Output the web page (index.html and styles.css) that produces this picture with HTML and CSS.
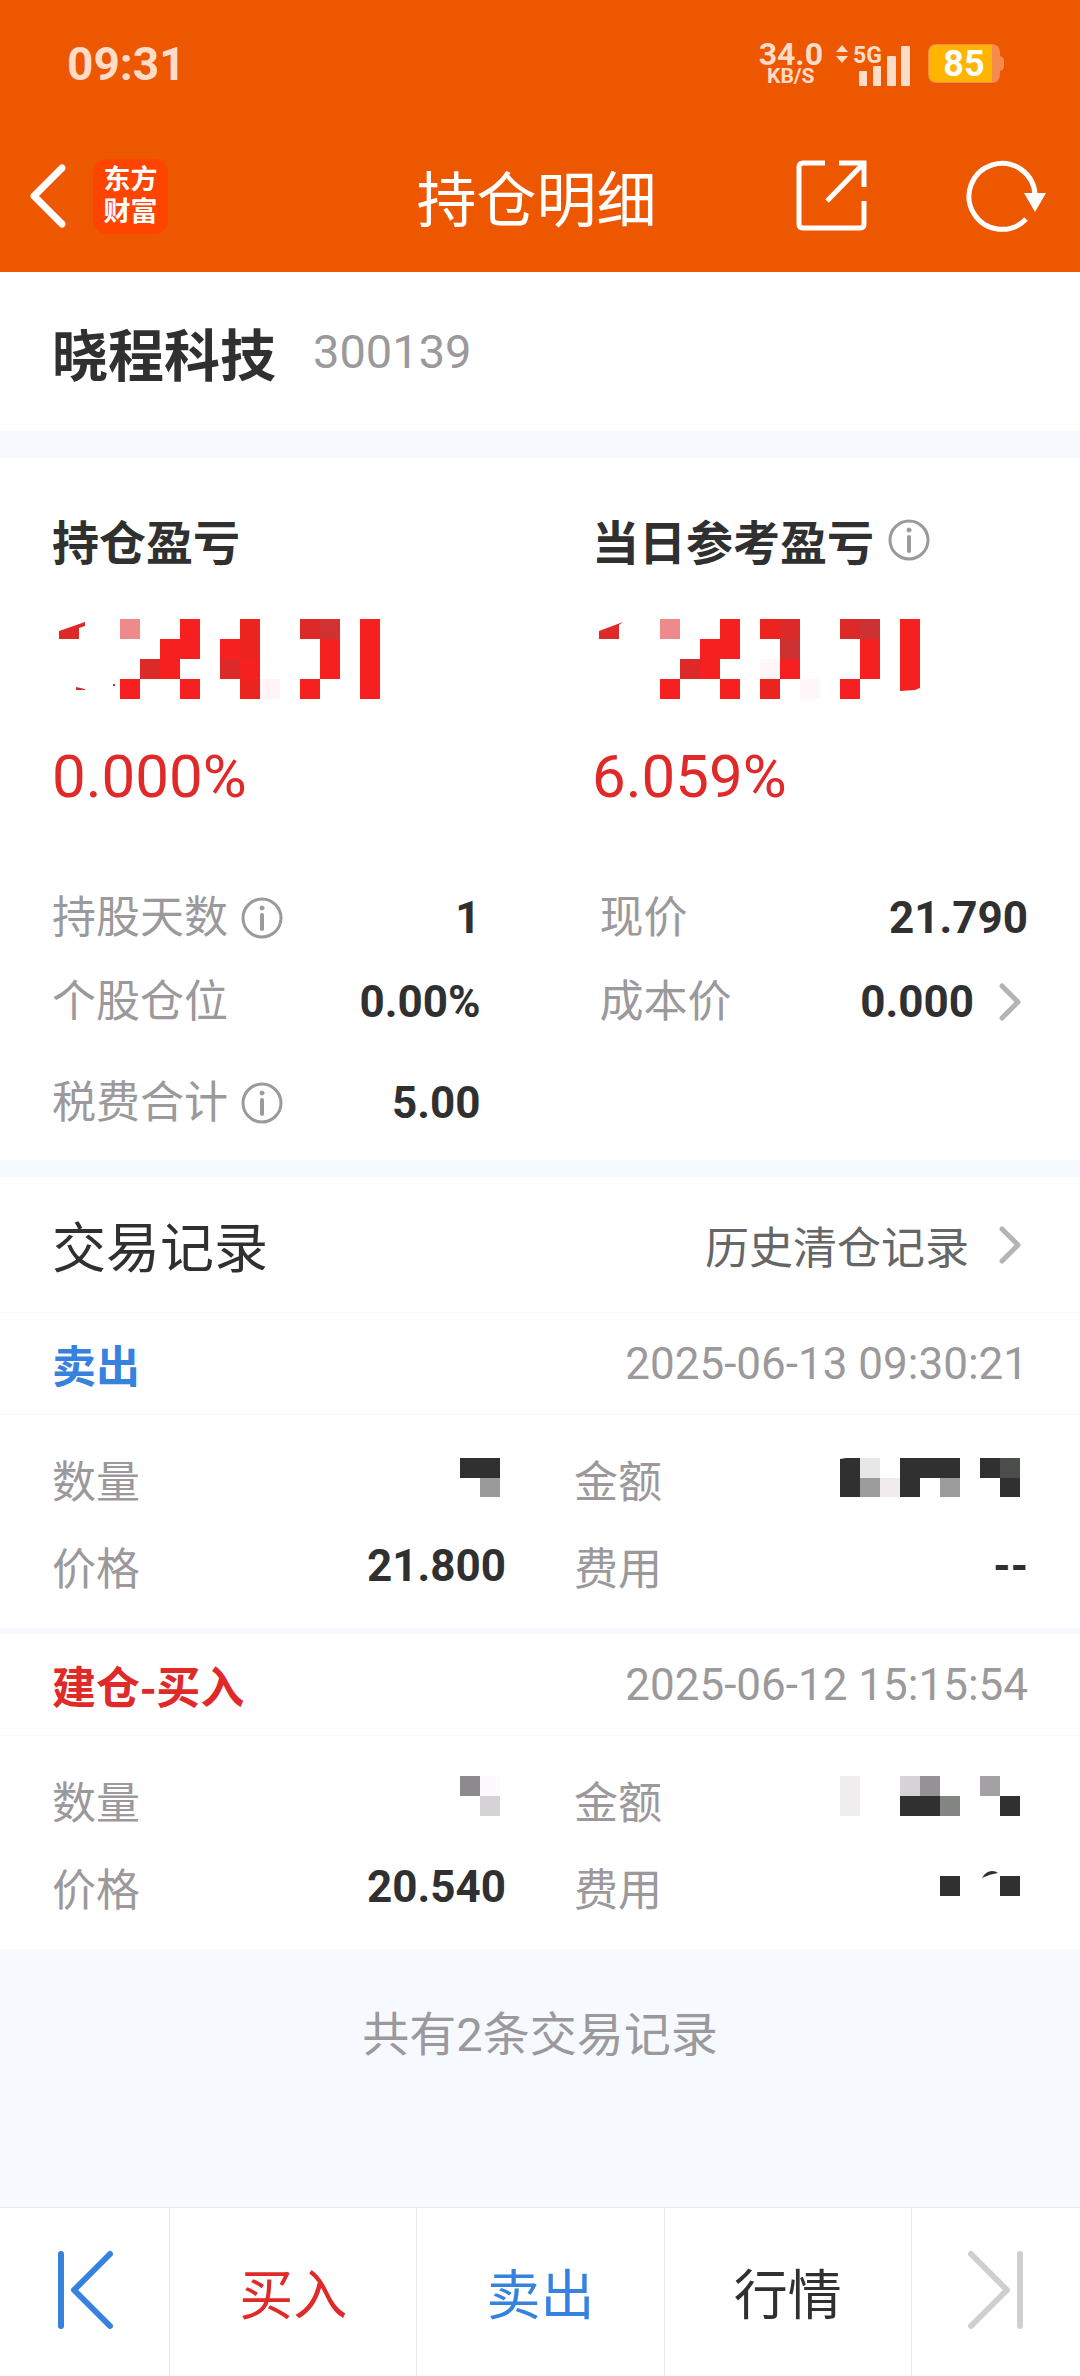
FILE: index.html
```html
<!DOCTYPE html>
<html lang="zh-CN">
<head>
    <meta charset="UTF-8">
    <meta name="viewport" content="width=device-width">
    <title>持仓明细</title>
    <link rel="stylesheet" href="styles.css">
</head>
<body>
    <header>
        <div class="status-bar">
            <span class="clock">09:31</span>
            <div class="status-right">
                <div class="net-speed"><span class="speed-num">34.0</span><span class="speed-unit">KB/S</span></div>
                <svg class="signal" width="76" height="44" viewBox="0 0 76 44" aria-hidden="true">
                    <path d="M2 10 L8 3 L14 10 Z M2 14 L8 21 L14 14 Z"/>
                    <text x="19" y="21">5G</text>
                    <rect x="25" y="29" width="8" height="15" rx="1"/>
                    <rect x="39" y="24" width="8" height="20" rx="1"/>
                    <rect x="53" y="14" width="9" height="30" rx="1"/>
                    <rect x="67" y="4" width="9" height="40" rx="1"/>
                </svg>
                <svg class="battery" width="76" height="40" viewBox="0 0 76 40" aria-hidden="true">
                    <path d="M9 0 H63 Q72 0 72 9 V12 Q76 13 76 17 V22 Q76 26 72 27 V30 Q72 39 63 39 H9 Q0 39 0 30 V9 Q0 0 9 0 Z" fill="#f58b4c"/>
                    <path d="M64 1 H9 Q1 1 1 9 V30 Q1 38 9 38 H64 Z" fill="#ffb400"/>
                    <text x="36" y="32">85</text>
                </svg>
            </div>
        </div>
        <div class="nav-bar">
            <div class="nav-left">
                <button class="icon-button" aria-label="返回">
                    <svg width="40" height="66" viewBox="0 0 40 66"><path d="M35 5 L7 33 L35 61" fill="none" stroke="#fff" stroke-width="7" stroke-linecap="round" stroke-linejoin="round"/></svg>
                </button>
                <div class="logo"><span>东方</span><span>财富</span></div>
            </div>
            <h1>持仓明细</h1>
            <div class="nav-right">
                <button class="icon-button" aria-label="分享">
                    <svg width="72" height="72" viewBox="0 0 72 72" fill="none" stroke="#fff" stroke-width="5">
                        <path d="M29 3 H7 Q3 3 3 7 V64 Q3 68 7 68 H64 Q68 68 68 64 V41"/>
                        <path d="M43 3 H68 V27 M68 3 L31 41"/>
                    </svg>
                </button>
                <button class="icon-button" aria-label="刷新">
                    <svg width="80" height="72" viewBox="0 0 80 72">
                        <path d="M60 59 A33 33 0 1 1 69 35" fill="none" stroke="#fff" stroke-width="5"/>
                        <path d="M58 33 H80 L69 52 Z" fill="#fff"/>
                    </svg>
                </button>
            </div>
        </div>
    </header>

    <main>
        <section class="stock">
            <h2>晓程科技</h2>
            <span class="code">300139</span>
        </section>

        <section class="profit">
            <div class="profit-top">
                <div class="profit-item">
                    <h3>持仓盈亏</h3>
                    <svg class="masked" width="340" height="80" viewBox="0 0 340 80" aria-hidden="true">
                        <path d="M7 12 L33 3 V7 L27 9 V20 H7 Z" fill="#dc2a28"/>
                        <path d="M24 68 L33 70 V71 H24 Z M61 65 h2 v2 h-2 Z" fill="#c83030"/>
                        <path d="M68 0h20v20h-20z" fill="#ee898c"/>
                        <path d="M128 0h20v40h-20v20h-20v-40h20z M68 60h20v20h-20z M128 60h20v20h-20z M168 20h20v20h-20z M188 40h20v20h-20z M268 20h20v40h-20z M248 60h20v20h-20z M308 0h20v80h-20z" fill="#f72020"/>
                        <path d="M188 0h20v40h-20z M188 60h20v20h-20z" fill="#eb2420"/>
                        <path d="M88 40h20v20h-20z M168 40h20v20h-20z M248 0h20v20h-20z" fill="#dc2a28"/>
                        <path d="M268 0h20v20h-20z" fill="#d33232"/>
                        <path d="M208 60h20v20h-20z" fill="#fff5f6"/>
                    </svg>
                    <p class="percent">0.000%</p>
                </div>
                <div class="profit-item">
                    <h3>当日参考盈亏
                        <button class="icon-button" aria-label="说明"><svg class="info" viewBox="0 0 42 42"><circle cx="21" cy="21" r="19"/><path d="M21 18 V32"/><circle class="dot" cx="21" cy="11" r="2"/></svg></button>
                    </h3>
                    <svg class="masked" width="340" height="80" viewBox="0 0 340 80" aria-hidden="true">
                        <path d="M7 12 L31 3 L27 6 V20 H7 Z" fill="#dc2a28"/>
                        <path d="M68 0h20v20h-20z" fill="#ee898c"/>
                        <path d="M128 0h20v40h-20v20h-20v-40h20z M68 60h20v20h-20z M128 60h20v20h-20z M188 40h20v20h-20z M268 20h20v40h-20z M248 60h20v20h-20z M308 0h20v69l-5 2l-15 1z" fill="#f72020"/>
                        <path d="M168 0h20v20h-20z M168 60h20v20h-20z" fill="#eb2420"/>
                        <path d="M88 40h20v20h-20z M188 0h20v20h-20z M248 0h20v20h-20z" fill="#dc2a28"/>
                        <path d="M268 0h20v20h-20z M188 20h20v20h-20z" fill="#cd3232"/>
                        <path d="M208 60h20v20h-20z M168 40h20v20h-20z" fill="#fff6f8"/>
                    </svg>
                    <p class="percent">6.059%</p>
                </div>
            </div>

            <dl class="figures">
                <div class="row">
                    <dt>持股天数 <button class="icon-button" aria-label="说明"><svg class="info" viewBox="0 0 42 42"><circle cx="21" cy="21" r="19"/><path d="M21 18 V32"/><circle class="dot" cx="21" cy="11" r="2"/></svg></button></dt>
                    <dd>1</dd>
                </div>
                <div class="row"><dt>现价</dt><dd>21.790</dd></div>
                <div class="row"><dt>个股仓位</dt><dd>0.00%</dd></div>
                <div class="row">
                    <dt>成本价</dt>
                    <dd>0.000 <svg class="arrow" viewBox="0 0 30 40"><path d="M4 4 L20 20 L4 36"/></svg></dd>
                </div>
            </dl>
            <dl class="figures fees">
                <div class="row">
                    <dt>税费合计 <button class="icon-button" aria-label="说明"><svg class="info" viewBox="0 0 42 42"><circle cx="21" cy="21" r="19"/><path d="M21 18 V32"/><circle class="dot" cx="21" cy="11" r="2"/></svg></button></dt>
                    <dd>5.00</dd>
                </div>
            </dl>
        </section>

        <section class="records">
            <div class="records-head">
                <h2>交易记录</h2>
                <a class="history" href="#">历史清仓记录 <svg class="arrow" viewBox="0 0 30 40"><path d="M4 4 L20 20 L4 36"/></svg></a>
            </div>

            <article class="record">
                <div class="record-head">
                    <h3 class="sell">卖出</h3>
                    <time>2025-06-13 09:30:21</time>
                </div>
                <dl class="details">
                    <div class="row">
                        <dt>数量</dt>
                        <dd><svg width="60" height="60" viewBox="0 0 60 60" aria-hidden="true"><path d="M14 9h40v20h-40z" fill="#303030"/><path d="M34 29h20v19h-20z" fill="#9b999c"/></svg></dd>
                    </div>
                    <div class="row">
                        <dt>金额</dt>
                        <dd><svg width="200" height="60" viewBox="0 0 200 60" aria-hidden="true">
                            <path d="M12 10l6 -1h14v39h-20z M72 9h60v20h-40v19h-20z M152 9h20v20h-20z M172 29h20v19h-20z" fill="#303030"/>
                            <path d="M32 9h20v20h-20z" fill="#e7e7e7"/>
                            <path d="M32 29h20v19h-20z M112 29h20v19h-20z" fill="#9b9b9b"/>
                            <path d="M52 29h20v19h-20z" fill="#f0ebef"/>
                            <path d="M172 9h20v20h-20z" fill="#4b4e4b"/>
                        </svg></dd>
                    </div>
                    <div class="row"><dt>价格</dt><dd>21.800</dd></div>
                    <div class="row"><dt>费用</dt><dd>--</dd></div>
                </dl>
            </article>

            <article class="record">
                <div class="record-head">
                    <h3 class="buy">建仓-买入</h3>
                    <time>2025-06-12 15:15:54</time>
                </div>
                <dl class="details">
                    <div class="row">
                        <dt>数量</dt>
                        <dd><svg width="60" height="60" viewBox="0 0 60 60" aria-hidden="true"><path d="M14 6h20v20h-20z" fill="#8c8a8d"/><path d="M34 6h20v20h-20z" fill="#fdf9fd"/><path d="M34 26h20v20h-20z" fill="#d5d3d6"/></svg></dd>
                    </div>
                    <div class="row">
                        <dt>金额</dt>
                        <dd><svg width="200" height="60" viewBox="0 0 200 60" aria-hidden="true">
                            <path d="M72 26h40v20h-40z M172 26h20v20h-20z" fill="#303030"/>
                            <path d="M12 6h20v40h-20z" fill="#efedee"/>
                            <path d="M72 6h20v20h-20z" fill="#d5d3d6"/>
                            <path d="M92 6h20v20h-20z" fill="#949295"/>
                            <path d="M112 26h20v20h-20z" fill="#828582"/>
                            <path d="M152 6h20v20h-20z" fill="#a3a1a4"/>
                        </svg></dd>
                    </div>
                    <div class="row"><dt>价格</dt><dd>20.540</dd></div>
                    <div class="row">
                        <dt>费用</dt>
                        <dd><svg width="200" height="60" viewBox="0 0 200 60" aria-hidden="true"><path d="M112 19h20v20h-20z M172 19h20v20h-20z M154 21 Q158 14 164 14 Q168 14 170 16 Q162 17 154 21z" fill="#303030"/></svg></dd>
                    </div>
                </dl>
            </article>
        </section>

        <p class="total">共有2条交易记录</p>
    </main>

    <nav class="bottom-bar">
        <button class="step" aria-label="上一只">
            <svg width="60" height="84" viewBox="0 0 60 84" stroke="#3782df"><path d="M6 6 V78 M55 6 L19 42 L55 78"/></svg>
        </button>
        <button class="buy">买入</button>
        <button class="sell">卖出</button>
        <button>行情</button>
        <button class="step" aria-label="下一只" disabled>
            <svg width="60" height="84" viewBox="0 0 60 84" stroke="#cfcfcf"><path d="M54 6 V78 M5 6 L41 42 L5 78"/></svg>
        </button>
    </nav>
</body>
</html>
```

FILE: styles.css
```css
* {
    box-sizing: border-box;
}
body {
    font-family: Roboto, 'Noto Sans CJK SC', sans-serif;
    margin: 0;
    background-color: #f6faff;
    color: #303030;
    display: flex;
    flex-direction: column;
    min-height: 100vh;
    font-size: 44px;
    line-height: 60px;
}
h1, h2, h3, p, dl, dd {
    margin: 0;
}
/* 纯中文文字 */
h1, h2, h3, .history, .details dt, .bottom-bar button {
    font-family: 'Noto Sans CJK SC', sans-serif;
}
svg {
    display: block;
    flex: none;
}
button {
    font: inherit;
    color: inherit;
    background: none;
    border: none;
    padding: 0;
    cursor: pointer;
}
.icon-button {
    display: flex;
}
/* 顶部 */
header {
    background-color: #ed5700;
    color: white;
}
.status-bar {
    display: flex;
    align-items: center;
    justify-content: space-between;
    height: 128px;
    padding: 0 76px 0 67px;
    color: #ffdcc8;
}
.clock {
    font-size: 46px;
    font-weight: 700;
}
.status-right {
    display: flex;
    align-items: center;
}
.net-speed {
    display: flex;
    flex-direction: column;
    align-items: center;
    margin-right: 11px;
    font-weight: 700;
}
.speed-num {
    font-size: 32px;
    line-height: 24px;
}
.speed-unit {
    font-size: 21px;
    line-height: 20px;
}
.signal {
    fill: #ffdcc8;
    margin-right: 18px;
}
.signal text {
    font-size: 23px;
    font-weight: 700;
}
.battery text {
    font-size: 36px;
    font-weight: 700;
    fill: white;
    text-anchor: middle;
}
.nav-bar {
    display: grid;
    grid-template-columns: 1fr auto 1fr;
    align-items: center;
    height: 144px;
    padding: 0 34px 8px 27px;
}
.nav-left, .nav-right {
    display: flex;
    align-items: center;
}
.nav-left {
    gap: 26px;
}
.nav-right {
    justify-content: flex-end;
    gap: 98px;
}
.nav-bar h1 {
    font-size: 60px;
    font-weight: 400;
    line-height: 80px;
}
.logo {
    display: flex;
    flex-direction: column;
    align-items: center;
    padding: 5px 0 6px;
    width: 75px;
    border-radius: 14px;
    background-color: #ff4400;
    font-size: 27px;
    line-height: 32px;
    font-weight: 700;
}
/* 股票名称 */
.stock {
    display: flex;
    align-items: center;
    gap: 37px;
    height: 159px;
    padding: 0 52px;
    background-color: white;
}
.stock h2 {
    font-size: 56px;
    line-height: 80px;
}
.code {
    font-size: 47px;
    color: #9b999b;
}
/* 盈亏 */
.profit {
    margin-top: 27px;
    padding: 48px 0 27px;
    background-color: white;
}
.profit-top {
    display: grid;
    grid-template-columns: 1fr 1fr;
}
.profit-item {
    padding-left: 52px;
}
.profit-item h3 {
    display: flex;
    align-items: center;
    gap: 14px;
    font-size: 47px;
    line-height: 68px;
}
.masked {
    margin: 45px 0 42px;
}
.percent {
    font-size: 60px;
    line-height: 72px;
    color: #e02a2a;
}
.info {
    width: 42px;
    height: 42px;
    fill: none;
    stroke: #9b999b;
    stroke-width: 3;
    stroke-linecap: round;
}
.info .dot {
    fill: #9b999b;
    stroke-width: 1;
}
.info path {
    stroke-width: 4;
}
.arrow {
    width: 30px;
    height: 40px;
    fill: none;
    stroke: #b5b3b5;
    stroke-width: 5;
    stroke-linecap: round;
    stroke-linejoin: round;
}
.figures {
    display: grid;
    grid-template-columns: 1fr 1fr;
    gap: 24px 119px;
    margin-top: 75px;
    padding: 0 52px;
}
.fees {
    margin-top: 41px;
}
.row {
    display: flex;
    justify-content: space-between;
}
dt, dd {
    display: flex;
    align-items: center;
}
dt {
    gap: 13px;
    color: #9b999b;
}
dd {
    gap: 24px;
    font-weight: 700;
}
/* 交易记录 */
.records {
    margin-top: 17px;
}
.records-head, .record-head {
    display: flex;
    align-items: center;
    justify-content: space-between;
    padding: 0 52px;
    background-color: white;
    border-bottom: 1px solid #fafafa;
}
.records-head {
    height: 136px;
}
.records-head h2 {
    font-size: 54px;
    font-weight: 400;
}
.history {
    display: flex;
    align-items: center;
    gap: 29px;
    color: #666;
    text-decoration: none;
}
.record {
    background-color: white;
}
.record + .record {
    margin-top: 6px;
}
.record-head {
    height: 102px;
}
.record-head h3 {
    font-size: 44px;
}
.record-head time {
    color: #9b999b;
}
.details {
    display: grid;
    grid-template-columns: 1fr 1fr;
    gap: 27px 68px;
    padding: 34px 52px 32px;
}
.buy {
    color: #e02a2a;
}
.sell {
    color: #3782df;
}
.total {
    margin-top: 56px;
    text-align: center;
    font-size: 47px;
    color: #9b999b;
}
/* 底部操作栏 */
.bottom-bar {
    display: grid;
    grid-template-columns: 169px 1fr 1fr 1fr 169px;
    height: 169px;
    margin-top: auto;
    background-color: white;
    border-top: 1px solid #e9e9e9;
}
.bottom-bar button {
    font-size: 54px;
}
.bottom-bar button + button {
    border-left: 1px solid #e9e9e9;
}
.bottom-bar .step {
    display: flex;
    align-items: center;
    justify-content: center;
    padding-bottom: 4px;
}
.step svg {
    fill: none;
    stroke-width: 6;
    stroke-linecap: round;
    stroke-linejoin: round;
}
```
